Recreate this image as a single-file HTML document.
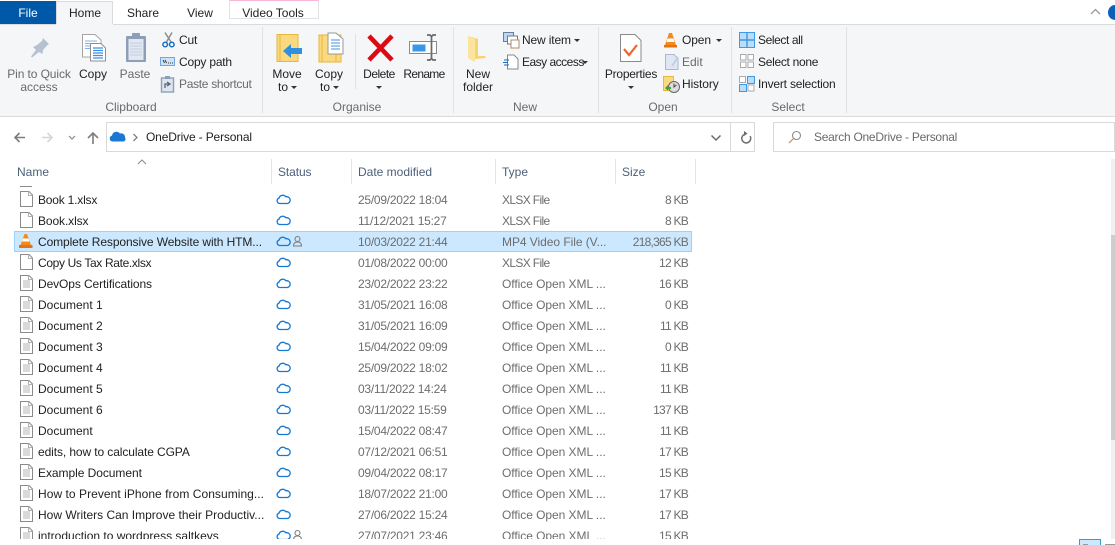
<!DOCTYPE html>
<html><head><meta charset="utf-8">
<style>
html,body{margin:0;padding:0;width:1115px;height:545px;overflow:hidden;background:#fff}
body{position:relative;font-family:"Liberation Sans",sans-serif;font-size:12px;color:#222}
.t{position:absolute;white-space:nowrap;line-height:14px}
.c{text-align:center;transform:translateX(-50%)}
.b{position:absolute}
.g{color:#6a6a6a}
.h{color:#4c607a}
.r{color:#6d6d6d}
.d{letter-spacing:-.25px}
.x{letter-spacing:-.65px}
.y{letter-spacing:-.05px}
.s{letter-spacing:-.75px}
.n{letter-spacing:-.15px}
.a{position:absolute;width:0;height:0;border-left:3px solid transparent;border-right:3px solid transparent;border-top:3px solid #333}
svg{position:absolute;overflow:visible}
</style></head><body>

<!-- tabs -->
<div class="b" style="left:0;top:1px;width:56px;height:23px;background:#0058a8"></div>
<div class="t c" style="left:28px;top:6px;color:#fff">File</div>
<div class="b" style="left:56px;top:1px;width:57px;height:24px;background:#f5f6f7;border:1px solid #dadbdc;border-bottom:none;box-sizing:border-box"></div>
<div class="t c" style="left:85px;top:6px">Home</div>
<div class="t c" style="left:143px;top:6px">Share</div>
<div class="t c" style="left:200px;top:6px">View</div>
<div class="b" style="left:229px;top:0;width:90px;height:19px;border:1px solid #e2e2e2;border-top:1px solid #f6b8d6;box-sizing:border-box"></div>
<div class="t c" style="left:273px;top:6px">Video Tools</div>
<svg style="left:1090px;top:8px" width="12" height="8"><path d="M1 6 L5.500 1.500 L10 6" fill="none" stroke="#9a9a9a" stroke-width="1.300"/></svg>
<div class="b" style="left:1108px;top:5px;width:14px;height:15px;border-radius:50%;background:#0a62b8"></div>

<!-- ribbon -->
<div class="b" style="left:0;top:24px;width:1115px;height:93px;background:#f5f6f7;border-top:1px solid #dadbdc;border-bottom:1px solid #dadbdc;box-sizing:border-box"></div>
<div class="b" style="left:56px;top:24px;width:57px;height:2px;background:#f5f6f7"></div>
<div class="b" style="left:262px;top:27px;width:1px;height:86px;background:#e1e2e3"></div>
<div class="b" style="left:453px;top:27px;width:1px;height:86px;background:#e1e2e3"></div>
<div class="b" style="left:598px;top:27px;width:1px;height:86px;background:#e1e2e3"></div>
<div class="b" style="left:731px;top:27px;width:1px;height:86px;background:#e1e2e3"></div>
<div class="b" style="left:846px;top:27px;width:1px;height:86px;background:#e1e2e3"></div>
<div class="b" style="left:355px;top:34px;width:1px;height:55px;background:#e1e2e3"></div>

<!-- Clipboard -->
<svg style="left:29px;top:37px" width="22" height="22"><path d="M14 1 L20 7 L18 8.500 L14 13 L13.500 17 L10 15 L3 20.500 L2 19.500 L7 13 L4 10 L8 8 L13 4 Z" fill="#b6c1d1"/></svg>
<div class="t c g" style="left:39px;top:67px;letter-spacing:-.1px">Pin to Quick</div>
<div class="t c g" style="left:39px;top:80px">access</div>
<svg style="left:81px;top:33px" width="26" height="30"><path d="M1.500 1.500H14L20 7V24H1.500Z" fill="#fff" stroke="#a5a5a5"/><path d="M4 8h12M4 10.500h12M4 13h12M4 15.500h12" stroke="#7fb2ee"/><path d="M9.500 10.500H20L24.500 15V28H9.500Z" fill="#fff" stroke="#8f8f8f"/><path d="M12 15h10M12 17.500h10M12 20h10M12 22.500h10M12 25h10" stroke="#3d8fe8" stroke-width="1.200"/></svg>
<div class="t c" style="left:93px;top:67px">Copy</div>
<svg style="left:125px;top:32px" width="22" height="31"><rect x="1" y="4" width="20" height="26" rx="1" fill="#8d9fb7"/><rect x="3.500" y="7" width="15" height="21" fill="#e2e8f1"/><path d="M5 11h12M5 14h12M5 17h12M5 20h12M5 23h12" stroke="#c3cede"/><rect x="7" y="1" width="8" height="5" fill="#8d9fb7"/></svg>
<div class="t c g" style="left:135px;top:67px">Paste</div>
<svg style="left:162px;top:32px" width="14" height="16"><path d="M3 0.500L9 10M10 0.500L4.500 10" stroke="#8a8a8a" stroke-width="1.400" fill="none"/><circle cx="3.200" cy="12.500" r="2.300" fill="none" stroke="#1a6fc8" stroke-width="1.500"/><circle cx="9.800" cy="12.500" r="2.300" fill="none" stroke="#1a6fc8" stroke-width="1.500"/></svg>
<div class="t" style="left:179px;top:33px;letter-spacing:-.2px">Cut</div>
<svg style="left:160px;top:57px" width="16" height="10"><rect x=".5" y=".5" width="14" height="8" fill="#cfe3f8" stroke="#6fa8e0"/><path d="M3 3l1.500 3M5 3l1.500 3" stroke="#333" stroke-width=".9"/><path d="M8 6h1M10 6h1M12 6h1" stroke="#333"/></svg>
<div class="t" style="left:179px;top:55px;letter-spacing:-.2px">Copy path</div>
<svg style="left:161px;top:76px" width="14" height="17"><rect x=".5" y="2" width="12" height="14" fill="#dfe5ee" stroke="#8d9fb7" stroke-width="1.400"/><rect x="4" y="0" width="5" height="3" fill="#8d9fb7"/><path d="M4 12V8h4M6 6l3 2-3 2" fill="none" stroke="#55637a" stroke-width="1.300"/></svg>
<div class="t g" style="left:179px;top:77px;letter-spacing:-.3px">Paste shortcut</div>
<div class="t c g" style="left:131px;top:100px">Clipboard</div>

<!-- Organise -->
<svg style="left:276px;top:33px" width="28" height="30"><rect x="1" y="1.500" width="21" height="27" fill="#fbd97e" stroke="#e8b73f"/><path d="M4 2v26" stroke="#e8b73f"/><path d="M7 21L15 14V18H26V24H15V28Z" fill="#2f8fe0" transform="translate(0,-3)"/></svg>
<div class="t c" style="left:287px;top:67px">Move</div>
<div class="t" style="left:278px;top:80px">to</div><div class="a" style="left:291px;top:86px"></div>
<svg style="left:318px;top:32px" width="28" height="31"><rect x="1" y="3" width="22" height="27" fill="#fbd97e" stroke="#e8b73f"/><path d="M4 3v27M18 16v14" stroke="#e8b73f"/><path d="M10 1h8l7 6v15H10Z" fill="#fff" stroke="#999"/><path d="M13 8h9M13 11h9M13 14h9M13 17h9" stroke="#3d8fe8"/></svg>
<div class="t c" style="left:329px;top:67px">Copy</div>
<div class="t" style="left:320px;top:80px">to</div><div class="a" style="left:333px;top:86px"></div>
<svg style="left:367px;top:35px" width="27" height="26"><path d="M2 1L25 25M25 1L2 25" stroke="#dc0a14" stroke-width="4.600"/></svg>
<div class="t c" style="left:379px;top:67px;letter-spacing:-.5px">Delete</div>
<div class="a" style="left:376px;top:86px"></div>
<svg style="left:409px;top:34px" width="30" height="28"><rect x=".5" y="7.500" width="27" height="12" fill="#fff" stroke="#8a8a8a"/><rect x="3.500" y="10.500" width="13" height="7" fill="#3b97e6"/><path d="M18 1h3l1.500 1.500L24 1h3M22.500 2.500v22M18 26h3l1.500-1.500L24 26h3" fill="none" stroke="#6a6a6a" stroke-width="1.700"/></svg>
<div class="t c" style="left:424px;top:67px;letter-spacing:-.7px">Rename</div>
<div class="t c g" style="left:357px;top:100px">Organise</div>

<!-- New -->
<svg style="left:467px;top:35px" width="20" height="28"><path d="M1 1L11 4V21H18L19 23L8 24V27L1 23Z" fill="#f9d36e"/><path d="M1 1L8 4V27L1 23Z" fill="#fbe3a0"/></svg>
<div class="t c" style="left:478px;top:67px">New</div>
<div class="t c" style="left:478px;top:80px">folder</div>
<svg style="left:503px;top:32px" width="17" height="17"><rect x=".5" y=".5" width="10" height="9" fill="#bcd8f4" stroke="#6a7f97"/><rect x="4.500" y="4" width="10" height="8" fill="#fff" stroke="#6a7f97"/><rect x="8" y="8" width="8" height="8" fill="#fff" stroke="#b8896a"/></svg>
<div class="t" style="left:522px;top:33px;letter-spacing:-.15px">New item</div><div class="a" style="left:574px;top:39px"></div>
<svg style="left:503px;top:54px" width="16" height="16"><path d="M4.500 1h6.500l4 4v10H4.500Z" fill="#fff" stroke="#888"/><path d="M1 6h5M0 8.500h5M1 11h5" stroke="#1c6ab5"/></svg>
<div class="t" style="left:522px;top:55px;letter-spacing:-.5px">Easy access</div><div class="a" style="left:582px;top:61px"></div>
<div class="t c g" style="left:525px;top:100px">New</div>

<!-- Open -->
<svg style="left:620px;top:34px" width="22" height="28"><path d="M.5.500H15L21 6.500V27.500H.5Z" fill="#fff" stroke="#8a8a8a"/><path d="M4 15L9 21L17 11" fill="none" stroke="#f0662a" stroke-width="2.200"/></svg>
<div class="t c" style="left:631px;top:67px;letter-spacing:-.25px">Properties</div>
<div class="a" style="left:628px;top:86px"></div>
<svg style="left:663px;top:32px" width="15" height="16"><path d="M6 1h3l4 12H2Z" fill="#f48a1c"/><path d="M4.500 6.500h6l1 3.500h-8Z" fill="#fff"/><rect x="1" y="13" width="13" height="2.500" fill="#e27414"/></svg>
<div class="t" style="left:682px;top:33px;letter-spacing:-.1px">Open</div><div class="a" style="left:716px;top:39px"></div>
<svg style="left:665px;top:54px" width="15" height="16"><path d="M.5.500H9L13 4.500V15.500H.5Z" fill="#dfe7f5" stroke="#a9b9d2"/><path d="M13 3L7 12" stroke="#c4cfe0" stroke-width="2"/></svg>
<div class="t g" style="left:682px;top:55px">Edit</div>
<svg style="left:663px;top:76px" width="17" height="17"><rect x=".5" y=".5" width="10" height="14" fill="#fbd97e" stroke="#e8b73f"/><circle cx="11" cy="11" r="5.500" fill="#ddd" stroke="#666"/><path d="M11 7.500V11L13.500 9" stroke="#444" fill="none"/><path d="M2 12l3-3v2h3v2H5v2Z" fill="#3fa535"/></svg>
<div class="t" style="left:682px;top:77px;letter-spacing:-.1px">History</div>
<div class="t c g" style="left:663px;top:100px">Open</div>

<!-- Select -->
<svg style="left:739px;top:32px" width="16" height="16"><rect x=".5" y=".5" width="15" height="15" fill="#bcdcf8" stroke="#3c9ae8"/><path d="M8 0v16M0 8h16" stroke="#3c9ae8" stroke-width="1.400"/></svg>
<div class="t" style="left:758px;top:33px;letter-spacing:-.4px">Select all</div>
<svg style="left:740px;top:54px" width="15" height="15"><g fill="#fff" stroke="#aaa"><rect x=".5" y=".5" width="5.500" height="5.500"/><rect x="8" y=".5" width="5.500" height="5.500"/><rect x=".5" y="8" width="5.500" height="5.500"/><rect x="8" y="8" width="5.500" height="5.500"/></g></svg>
<div class="t" style="left:758px;top:55px;letter-spacing:-.3px">Select none</div>
<svg style="left:739px;top:76px" width="16" height="16"><rect x=".5" y=".5" width="6" height="6" fill="#fff" stroke="#aaa"/><rect x="8.500" y=".5" width="7" height="7" fill="#bcdcf8" stroke="#3c9ae8"/><rect x=".5" y="8.500" width="7" height="7" fill="#bcdcf8" stroke="#3c9ae8"/><rect x="9" y="9" width="6" height="6" fill="#fff" stroke="#aaa"/></svg>
<div class="t" style="left:758px;top:77px;letter-spacing:-.2px">Invert selection</div>
<div class="t c g" style="left:788px;top:100px">Select</div>

<!-- nav -->
<svg style="left:13px;top:131px" width="90" height="14"><path d="M12 6.500H2M6.500 2L2 6.500L6.500 11" fill="none" stroke="#7d7d7d" stroke-width="1.600"/><path d="M29 6.500H39M34.500 2L39 6.500L34.500 11" fill="none" stroke="#d5d5d5" stroke-width="1.600"/><path d="M56 5L59 8L62 5" fill="none" stroke="#8a8a8a" stroke-width="1.200"/><path d="M80 13V2M75 7L80 2L85 7" fill="none" stroke="#7d7d7d" stroke-width="1.600"/></svg>
<div class="b" style="left:106px;top:122px;width:649px;height:30px;border:1px solid #d9d9d9;box-sizing:border-box"></div>
<div class="b" style="left:730px;top:122px;width:1px;height:30px;background:#d9d9d9"></div>
<svg style="left:109px;top:130px" width="17" height="12"><path d="M3.500 11.500A3 3 0 0 1 3 5.600A4.500 4.500 0 0 1 11 3.500A3.800 3.800 0 0 1 16 7.500A2.500 2.500 0 0 1 14.500 11.500Z" fill="#1a78d2"/></svg>
<svg style="left:132px;top:133px" width="6" height="9"><path d="M1.500 1L5 4.500L1.500 8" fill="none" stroke="#808080" stroke-width="1.300"/></svg>
<div class="t" style="left:146px;top:130px;letter-spacing:-.15px">OneDrive - Personal</div>
<svg style="left:710px;top:134px" width="12" height="8"><path d="M1.500 1.500L6 6L10.500 1.500" fill="none" stroke="#6a6a6a" stroke-width="1.500"/></svg>
<svg style="left:740px;top:131px" width="12" height="13"><path d="M6.500 2.500A4.500 4.500 0 1 1 2 7" transform="rotate(60 6 7)" fill="none" stroke="#6a6a6a" stroke-width="1.500"/><path d="M4 0L7.500 2.500L4 5Z" fill="#6a6a6a"/></svg>
<div class="b" style="left:773px;top:122px;width:342px;height:30px;border:1px solid #d9d9d9;box-sizing:border-box"></div>
<svg style="left:788px;top:130px" width="14" height="14"><circle cx="8.500" cy="5.500" r="4" fill="none" stroke="#8a8a8a" stroke-width="1.100"/><path d="M5.500 8.500L1 13" stroke="#c9866a" stroke-width="1.200"/></svg>
<div class="t g" style="left:814px;top:130px;letter-spacing:-.27px">Search OneDrive - Personal</div>

<!-- headers -->
<svg style="left:137px;top:159px" width="10" height="6"><path d="M1 5L5 1L9 5" fill="none" stroke="#888" stroke-width="1"/></svg>
<div class="b" style="left:271px;top:159px;width:1px;height:25px;background:#e5e5e5"></div>
<div class="b" style="left:351px;top:159px;width:1px;height:25px;background:#e5e5e5"></div>
<div class="b" style="left:495px;top:159px;width:1px;height:25px;background:#e5e5e5"></div>
<div class="b" style="left:615px;top:159px;width:1px;height:25px;background:#e5e5e5"></div>
<div class="b" style="left:695px;top:159px;width:1px;height:25px;background:#e5e5e5"></div>
<div class="t h" style="left:17px;top:165px">Name</div>
<div class="t h" style="left:278px;top:165px;letter-spacing:-.1px">Status</div>
<div class="t h" style="left:358px;top:165px">Date modified</div>
<div class="t h" style="left:502px;top:165px">Type</div>
<div class="t h" style="left:622px;top:165px">Size</div>

<!-- scrollbar -->
<div class="b" style="left:1111px;top:159px;width:4px;height:380px;background:#f0f0f0"></div>
<div class="b" style="left:1111px;top:235px;width:4px;height:205px;background:#cdcdcd"></div>
<div class="b" style="left:1079px;top:539px;width:22px;height:6px;background:#cce8ff;border:1px solid #2f9fe0;border-bottom:none;box-sizing:border-box"></div>
<div class="b" style="left:1083px;top:544px;width:5px;height:1px;background:#999"></div>
<div class="b" style="left:1105px;top:544px;width:10px;height:1px;background:#999"></div>

<!-- list -->
<div class="b" style="left:0;top:186px;width:1100px;height:353px;overflow:hidden">
<div class="b" style="left:20px;top:-7px;width:12px;height:8px;border:1px solid #8a8a8a;box-sizing:border-box;background:#fff"></div>
<div class="b" style="left:212px;top:-2px;width:1px;height:2px;background:#333"></div>
<div class="b" style="left:14px;top:45px;width:678px;height:21px;background:#cce8ff;border:1px solid #99d1ff;box-sizing:border-box"></div>

<svg width="0" height="0" style="position:absolute"><defs>
<g id="f"><path d="M.5.500H9L12.500 4V15.500H.5Z" fill="#fff" stroke="#8a8a8a"/><path d="M8.500.5V4.500H12.500" fill="none" stroke="#b0b0b0"/></g>
<g id="d"><use href="#f"/><path d="M3 6h7M3 8h7M3 10h7M3 12h7" stroke="#b5b5b5"/></g>
<g id="c"><path d="M3.500 9.500A2.800 2.800 0 0 1 3 4.100A4 4 0 0 1 10 2.800A3.300 3.300 0 0 1 11.500 9.500Z" fill="none" stroke="#1478d4" stroke-width="1.300"/></g>
<g id="p"><circle cx="4.500" cy="3" r="2.500" fill="none" stroke="#7d7d7d" stroke-width="1.100"/><path d="M.5 10C.5 7 2.500 6 4.500 6S8.500 7 8.500 10Z" fill="none" stroke="#7d7d7d" stroke-width="1.100"/></g>
</defs></svg>

<svg style="left:20px;top:5px" width="14" height="17"><use href="#f"/></svg>
<svg style="left:20px;top:26px" width="14" height="17"><use href="#f"/></svg>
<svg style="left:19px;top:47px" width="14" height="16"><path d="M5.500 1h2.500l4 11H1.500Z" fill="#f48a1c"/><path d="M4 5.500h5.500l1 3h-7.500Z" fill="#fff"/><rect x="0" y="12" width="13.500" height="3" fill="#e27414"/></svg>
<svg style="left:20px;top:68px" width="14" height="17"><use href="#f"/></svg>
<svg style="left:20px;top:89px" width="14" height="17"><use href="#d"/></svg>
<svg style="left:20px;top:110px" width="14" height="17"><use href="#d"/></svg>
<svg style="left:20px;top:131px" width="14" height="17"><use href="#d"/></svg>
<svg style="left:20px;top:152px" width="14" height="17"><use href="#d"/></svg>
<svg style="left:20px;top:173px" width="14" height="17"><use href="#d"/></svg>
<svg style="left:20px;top:194px" width="14" height="17"><use href="#d"/></svg>
<svg style="left:20px;top:215px" width="14" height="17"><use href="#d"/></svg>
<svg style="left:20px;top:236px" width="14" height="17"><use href="#d"/></svg>
<svg style="left:20px;top:257px" width="14" height="17"><use href="#d"/></svg>
<svg style="left:20px;top:278px" width="14" height="17"><use href="#d"/></svg>
<svg style="left:20px;top:299px" width="14" height="17"><use href="#d"/></svg>
<svg style="left:20px;top:320px" width="14" height="17"><use href="#d"/></svg>
<svg style="left:20px;top:341px" width="14" height="17"><use href="#d"/></svg>

<svg style="left:276px;top:8px" width="14" height="11"><use href="#c"/></svg>
<svg style="left:276px;top:29px" width="14" height="11"><use href="#c"/></svg>
<svg style="left:276px;top:50px" width="14" height="11"><use href="#c"/></svg>
<svg style="left:293px;top:50px" width="10" height="11"><use href="#p"/></svg>
<svg style="left:276px;top:71px" width="14" height="11"><use href="#c"/></svg>
<svg style="left:276px;top:92px" width="14" height="11"><use href="#c"/></svg>
<svg style="left:276px;top:113px" width="14" height="11"><use href="#c"/></svg>
<svg style="left:276px;top:134px" width="14" height="11"><use href="#c"/></svg>
<svg style="left:276px;top:155px" width="14" height="11"><use href="#c"/></svg>
<svg style="left:276px;top:176px" width="14" height="11"><use href="#c"/></svg>
<svg style="left:276px;top:197px" width="14" height="11"><use href="#c"/></svg>
<svg style="left:276px;top:218px" width="14" height="11"><use href="#c"/></svg>
<svg style="left:276px;top:239px" width="14" height="11"><use href="#c"/></svg>
<svg style="left:276px;top:260px" width="14" height="11"><use href="#c"/></svg>
<svg style="left:276px;top:281px" width="14" height="11"><use href="#c"/></svg>
<svg style="left:276px;top:302px" width="14" height="11"><use href="#c"/></svg>
<svg style="left:276px;top:323px" width="14" height="11"><use href="#c"/></svg>
<svg style="left:276px;top:344px" width="14" height="11"><use href="#c"/></svg>
<svg style="left:293px;top:344px" width="10" height="11"><use href="#p"/></svg>

<div class="t" style="left:38px;top:7px;letter-spacing:-.2px">Book 1.xlsx</div><div class="t r d" style="left:358px;top:7px">25/09/2022 18:04</div><div class="t r x" style="left:502px;top:7px">XLSX File</div><div class="t r s" style="right:412px;top:7px">8 KB</div>
<div class="t" style="left:38px;top:28px;letter-spacing:-.1px">Book.xlsx</div><div class="t r d" style="left:358px;top:28px">11/12/2021 15:27</div><div class="t r x" style="left:502px;top:28px">XLSX File</div><div class="t r s" style="right:412px;top:28px">8 KB</div>
<div class="t" style="left:38px;top:49px;letter-spacing:-.1px">Complete Responsive Website with HTM...</div><div class="t r d" style="left:358px;top:49px">10/03/2022 21:44</div><div class="t r y" style="left:502px;top:49px">MP4 Video File (V...</div><div class="t r s" style="right:412px;top:49px">218,365 KB</div>
<div class="t" style="left:38px;top:70px;letter-spacing:-.35px">Copy Us Tax Rate.xlsx</div><div class="t r d" style="left:358px;top:70px">01/08/2022 00:00</div><div class="t r x" style="left:502px;top:70px">XLSX File</div><div class="t r s" style="right:412px;top:70px">12 KB</div>
<div class="t" style="left:38px;top:91px;letter-spacing:-.1px">DevOps Certifications</div><div class="t r d" style="left:358px;top:91px">23/02/2022 23:22</div><div class="t r y" style="left:502px;top:91px">Office Open XML ...</div><div class="t r s" style="right:412px;top:91px">16 KB</div>
<div class="t" style="left:38px;top:112px">Document 1</div><div class="t r d" style="left:358px;top:112px">31/05/2021 16:08</div><div class="t r y" style="left:502px;top:112px">Office Open XML ...</div><div class="t r s" style="right:412px;top:112px">0 KB</div>
<div class="t" style="left:38px;top:133px">Document 2</div><div class="t r d" style="left:358px;top:133px">31/05/2021 16:09</div><div class="t r y" style="left:502px;top:133px">Office Open XML ...</div><div class="t r s" style="right:412px;top:133px">11 KB</div>
<div class="t" style="left:38px;top:154px">Document 3</div><div class="t r d" style="left:358px;top:154px">15/04/2022 09:09</div><div class="t r y" style="left:502px;top:154px">Office Open XML ...</div><div class="t r s" style="right:412px;top:154px">0 KB</div>
<div class="t" style="left:38px;top:175px">Document 4</div><div class="t r d" style="left:358px;top:175px">25/09/2022 18:02</div><div class="t r y" style="left:502px;top:175px">Office Open XML ...</div><div class="t r s" style="right:412px;top:175px">11 KB</div>
<div class="t" style="left:38px;top:196px">Document 5</div><div class="t r d" style="left:358px;top:196px">03/11/2022 14:24</div><div class="t r y" style="left:502px;top:196px">Office Open XML ...</div><div class="t r s" style="right:412px;top:196px">11 KB</div>
<div class="t" style="left:38px;top:217px">Document 6</div><div class="t r d" style="left:358px;top:217px">03/11/2022 15:59</div><div class="t r y" style="left:502px;top:217px">Office Open XML ...</div><div class="t r s" style="right:412px;top:217px">137 KB</div>
<div class="t" style="left:38px;top:238px">Document</div><div class="t r d" style="left:358px;top:238px">15/04/2022 08:47</div><div class="t r y" style="left:502px;top:238px">Office Open XML ...</div><div class="t r s" style="right:412px;top:238px">11 KB</div>
<div class="t" style="left:38px;top:259px;letter-spacing:-.1px">edits, how to calculate CGPA</div><div class="t r d" style="left:358px;top:259px">07/12/2021 06:51</div><div class="t r y" style="left:502px;top:259px">Office Open XML ...</div><div class="t r s" style="right:412px;top:259px">17 KB</div>
<div class="t" style="left:38px;top:280px;letter-spacing:-.05px">Example Document</div><div class="t r d" style="left:358px;top:280px">09/04/2022 08:17</div><div class="t r y" style="left:502px;top:280px">Office Open XML ...</div><div class="t r s" style="right:412px;top:280px">15 KB</div>
<div class="t" style="left:38px;top:301px;letter-spacing:.05px">How to Prevent iPhone from Consuming...</div><div class="t r d" style="left:358px;top:301px">18/07/2022 21:00</div><div class="t r y" style="left:502px;top:301px">Office Open XML ...</div><div class="t r s" style="right:412px;top:301px">17 KB</div>
<div class="t" style="left:38px;top:322px">How Writers Can Improve their Productiv...</div><div class="t r d" style="left:358px;top:322px">27/06/2022 15:24</div><div class="t r y" style="left:502px;top:322px">Office Open XML ...</div><div class="t r s" style="right:412px;top:322px">17 KB</div>
<div class="t" style="left:38px;top:343px">introduction to wordpress saltkeys</div><div class="t r d" style="left:358px;top:343px">27/07/2021 23:46</div><div class="t r y" style="left:502px;top:343px">Office Open XML ...</div><div class="t r s" style="right:412px;top:343px">15 KB</div>
</div>
</body></html>
